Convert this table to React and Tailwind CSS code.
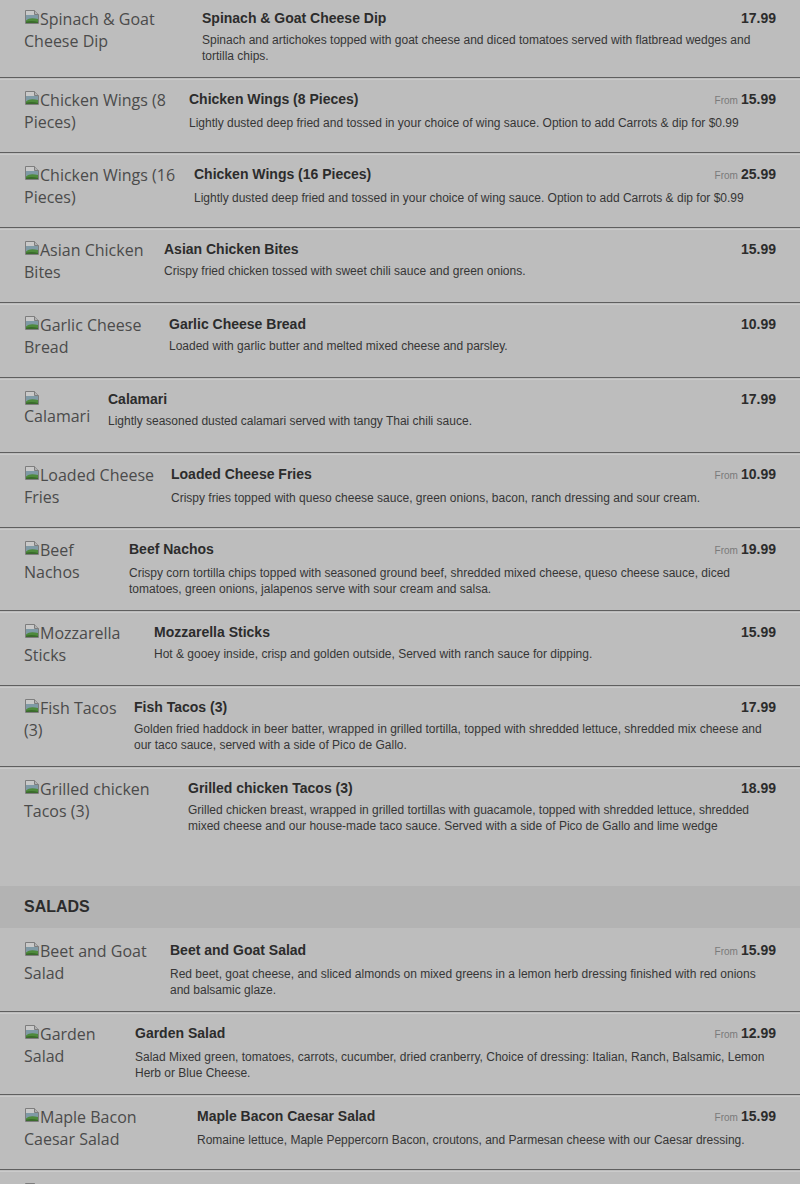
import React from 'react';

const appetizers = [
  {
    name: 'Spinach & Goat Cheese Dip',
    price: '17.99',
    desc: 'Spinach and artichokes topped with goat cheese and diced tomatoes served with flatbread wedges and tortilla chips.',
    w: 'w-[164px]',
  },
  {
    name: 'Chicken Wings (8 Pieces)',
    from: true,
    price: '15.99',
    desc: 'Lightly dusted deep fried and tossed in your choice of wing sauce. Option to add Carrots & dip for $0.99',
    w: 'w-[151px]',
  },
  {
    name: 'Chicken Wings (16 Pieces)',
    from: true,
    price: '25.99',
    desc: 'Lightly dusted deep fried and tossed in your choice of wing sauce. Option to add Carrots & dip for $0.99',
    w: 'w-[156px]',
  },
  {
    name: 'Asian Chicken Bites',
    price: '15.99',
    desc: 'Crispy fried chicken tossed with sweet chili sauce and green onions.',
    w: 'w-[126px]',
  },
  {
    name: 'Garlic Cheese Bread',
    price: '10.99',
    desc: 'Loaded with garlic butter and melted mixed cheese and parsley.',
    w: 'w-[131px]',
  },
  {
    name: 'Calamari',
    price: '17.99',
    desc: 'Lightly seasoned dusted calamari served with tangy Thai chili sauce.',
    w: 'w-[70px]',
    iconBlock: true,
  },
  {
    name: 'Loaded Cheese Fries',
    from: true,
    price: '10.99',
    desc: 'Crispy fries topped with queso cheese sauce, green onions, bacon, ranch dressing and sour cream.',
    w: 'w-[133px]',
  },
  {
    name: 'Beef Nachos',
    from: true,
    price: '19.99',
    desc: 'Crispy corn tortilla chips topped with seasoned ground beef, shredded mixed cheese, queso cheese sauce, diced tomatoes, green onions, jalapenos serve with sour cream and salsa.',
    w: 'w-[91px]',
  },
  {
    name: 'Mozzarella Sticks',
    price: '15.99',
    desc: 'Hot & gooey inside, crisp and golden outside, Served with ranch sauce for dipping.',
    w: 'w-[116px]',
  },
  {
    name: 'Fish Tacos (3)',
    price: '17.99',
    desc: 'Golden fried haddock in beer batter, wrapped in grilled tortilla, topped with shredded lettuce, shredded mix cheese and our taco sauce, served with a side of Pico de Gallo.',
    w: 'w-[96px]',
  },
  {
    name: 'Grilled chicken Tacos (3)',
    price: '18.99',
    desc: 'Grilled chicken breast, wrapped in grilled tortillas with guacamole, topped with shredded lettuce, shredded mixed cheese and our house-made taco sauce. Served with a side of Pico de Gallo and lime wedge',
    w: 'w-[150px]',
  },
];

const salads = [
  {
    name: 'Beet and Goat Salad',
    from: true,
    price: '15.99',
    desc: 'Red beet, goat cheese, and sliced almonds on mixed greens in a lemon herb dressing finished with red onions and balsamic glaze.',
    w: 'w-[132px]',
  },
  {
    name: 'Garden Salad',
    from: true,
    price: '12.99',
    desc: 'Salad Mixed green, tomatoes, carrots, cucumber, dried cranberry, Choice of dressing: Italian, Ranch, Balsamic, Lemon Herb or Blue Cheese.',
    w: 'w-[97px]',
  },
  {
    name: 'Maple Bacon Caesar Salad',
    from: true,
    price: '15.99',
    desc: 'Romaine lettuce, Maple Peppercorn Bacon, croutons, and Parmesan cheese with our Caesar dressing.',
    w: 'w-[159px]',
  },
  {
    name: 'Greek Salad',
    from: true,
    price: '14.99',
    desc: 'Mixed greens, tomatoes, cucumber, red onions, olives and feta cheese with Greek dressing.',
    w: 'w-[97px]',
  },
];

function BrokenImage({ block }) {
  return (
    <svg
      className={`relative top-[1px] h-4 w-4 ${block ? 'block' : 'inline-block align-top'}`}
      viewBox="0 0 16 16"
    >
      <path d="M1.5 1.5H10.5L14.5 5.5V14.5H1.5Z" fill="#c9c9c9" stroke="#7d7d7d" />
      <path d="M10.5 1.5V5.5H14.5" fill="#b0b0b0" stroke="#7d7d7d" />
      <rect x="2" y="6" width="12" height="8" fill="#7f9aa6" />
      <path d="M2 14V11.5C5 9 8 8.5 14 10V14Z" fill="#4e8a3c" />
      <path d="M2 14V12.8C6 11.5 10 12 14 13V14Z" fill="#3a6b2c" />
    </svg>
  );
}

function Divider() {
  return (
    <div>
      <div className="h-px bg-[#5f5f5f]" />
      <div className="h-px" />
      <div className="h-px bg-[#cbcbcb]" />
    </div>
  );
}

function MenuRow({ item, afterHeader }) {
  return (
    <div className={`flex pl-6 pr-6 pb-[13px] ${afterHeader ? 'pt-[12px]' : 'pt-[9px]'}`}>
      <div className={`${item.w} h-[50px] shrink-0 text-[16px] leading-[22px] text-[#4b4b4b] font-['Open_Sans',sans-serif]`}>
        <BrokenImage block={item.iconBlock} />
        {item.name}
      </div>
      <div className="ml-[14px] flex-1 min-w-0">
        <div className="flex items-start justify-between">
          <h3 className="text-[14px] leading-[20px] font-bold text-[#2c2c2c]">{item.name}</h3>
          <div className={`flex items-baseline whitespace-nowrap ${item.from ? 'h-[22px]' : 'h-[20px]'}`}>
            {item.from && <span className="mr-[3px] text-[10px] text-[#7a7a7a]">From</span>}
            <span className="text-[14px] leading-[20px] font-bold text-[#2c2c2c]">{item.price}</span>
          </div>
        </div>
        <p className="mt-[4px] text-[12px] leading-[16px] text-[#363636]">{item.desc}</p>
      </div>
    </div>
  );
}

export default function App() {
  return (
    <div className="min-h-screen overflow-hidden bg-[#bdbdbd] font-['Liberation_Sans',Arial,sans-serif]">
      <div className="-mt-[1px]">
        {/* Appetizers */}
        <div className="pb-[39px]">
          {appetizers.map((item, i) => (
            <div key={item.name}>
              {i > 0 && <Divider />}
              <MenuRow item={item} />
            </div>
          ))}
        </div>

        {/* Salads */}
        <div className="flex h-[42px] items-center bg-[#b3b3b3] px-6">
          <h2 className="text-[16px] font-bold uppercase text-[#2c2c2c]">Salads</h2>
        </div>
        <div>
          {salads.map((item, i) => (
            <div key={item.name}>
              {i > 0 && <Divider />}
              <MenuRow item={item} afterHeader={i === 0} />
            </div>
          ))}
        </div>
      </div>
    </div>
  );
}
